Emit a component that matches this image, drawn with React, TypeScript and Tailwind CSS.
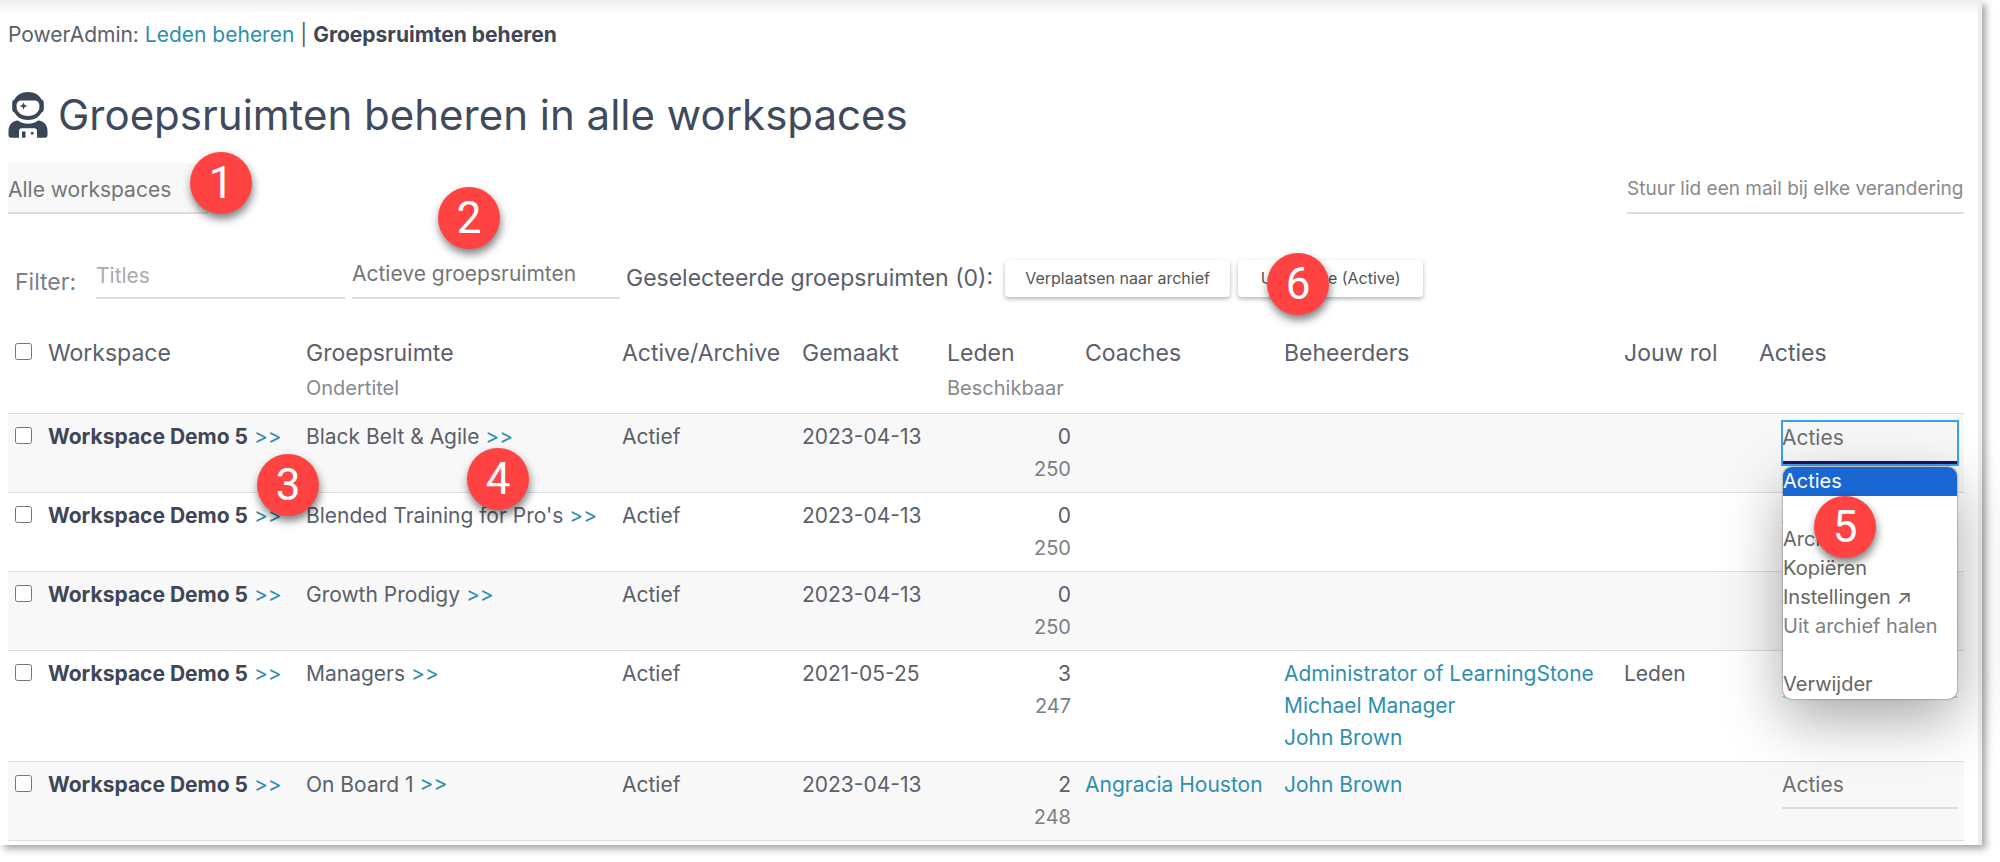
import React from 'react';

type Group = {
    name: string;
    created: string;
    members: number;
    available: number;
    coaches?: string[];
    admins?: string[];
    role?: string;
};

const groups: Group[] = [
    { name: 'Black Belt & Agile', created: '2023-04-13', members: 0, available: 250 },
    { name: "Blended Training for Pro's", created: '2023-04-13', members: 0, available: 250 },
    { name: 'Growth Prodigy', created: '2023-04-13', members: 0, available: 250 },
    {
        name: 'Managers',
        created: '2021-05-25',
        members: 3,
        available: 247,
        admins: ['Administrator of LearningStone', 'Michael Manager', 'John Brown'],
        role: 'Leden',
    },
    {
        name: 'On Board 1',
        created: '2023-04-13',
        members: 2,
        available: 248,
        coaches: ['Angracia Houston'],
        admins: ['John Brown'],
    },
];

const AdminIcon = () => (
    <svg viewBox="0 0 40 46" className="h-[46px] w-10 shrink-0" aria-hidden="true">
        <path
            fill="#3b4558"
            fillRule="evenodd"
            d="M20 0c6.500 0 11.500 3 13.500 7.500 1.700.6 2.300 1.800 2.300 3.500v6c0 1.800-.7 3-2.300 3.500C31.500 25 26.500 28 20 28S8.500 25 6.500 20.500C4.800 20 4.200 18.800 4.200 17v-6c0-1.700.6-2.900 2.300-3.500C8.500 3 13.500 0 20 0zM13.500 8.500c-3.500 0-5 2.300-5 5.800C8.500 20 13 24 20 24s11.500-4 11.500-9.700c0-3.500-1.500-5.800-5-5.800z"
        />
        <path fill="#3b4558" d="M15.500 10.500l1.200 2.600 2.800.9-2.800.9-1.200 2.600-1.200-2.600-2.800-.9 2.800-.9z" />
        <path
            fill="#3b4558"
            d="M10 28.500c2.800 2.300 6.300 3.300 10 3.300s7.200-1 10-3.300c6 .5 9.500 4.500 9.500 10.500v4c0 1.800-.8 2.700-2.700 2.700H29V39c0-1.800-.8-2.700-2.600-2.700H13.600c-1.800 0-2.600.9-2.600 2.700v6.700H3.200C1.300 45.700.5 44.800.5 43v-4c0-6 3.500-10 9.500-10.500z"
        />
        <path fill="#3b4558" d="M14 39.500h3.500v6.200H14zM23 40h2.500v2.500H23z" />
    </svg>
);

const Badge = ({ nr, className }: { nr: number; className: string }) => (
    <span
        className={`absolute z-20 flex size-[62px] items-center justify-center rounded-full bg-[#ff4242] font-['Roboto','Liberation_Sans',sans-serif] text-[44px] leading-none text-white shadow-[1px_5px_8px_rgba(0,0,0,0.5)] ${className}`}
    >
        {nr}
    </span>
);

const ActionMenu = () => (
    <ul
        role="listbox"
        aria-label="Acties"
        className="absolute top-[46px] left-px z-10 w-[174px] overflow-hidden rounded-[9px] bg-white text-[20px] leading-[29px] whitespace-nowrap text-[#666] shadow-[0_0_2px_rgba(0,0,0,0.6),0_20px_60px_rgba(0,0,0,0.35)]"
    >
        <li role="option" aria-selected="true" className="bg-[#1967d2] text-white">Acties</li>
        <li role="separator" className="h-[29px]" />
        <li role="option" aria-selected="false">Archiveer</li>
        <li role="option" aria-selected="false">Kopiëren</li>
        <li role="option" aria-selected="false">Instellingen ↗</li>
        <li role="option" aria-selected="false" className="text-[#808080]">Uit archief halen</li>
        <li role="separator" className="h-[29px]" />
        <li role="option" aria-selected="false">Verwijder</li>
    </ul>
);

const PersonList = ({ people = [] }: { people?: string[] }) => (
    <>
        {people.map((person) => (
            <a key={person} href="#" className="block text-[#2f8fae]">{person}</a>
        ))}
    </>
);

const GroupRow = ({ group, open }: { group: Group; open: boolean }) => (
    <tr className="border-b border-[#dcdee0] align-top odd:bg-[#f8f8f8]">
        <td className="py-[7px] pl-[7px]">
            <input type="checkbox" aria-label={`Selecteer ${group.name}`} className="mt-1.5 block size-[17px]" />
        </td>
        <td className="py-[7px]">
            <b className="font-bold text-[#3f4656]">Workspace Demo 5</b> <a href="#" className="text-[#2f8fae]">&gt;&gt;</a>
        </td>
        <td className="py-[7px]">
            {group.name} <a href="#" className="text-[#2f8fae]">&gt;&gt;</a>
        </td>
        <td className="py-[7px]">Actief</td>
        <td className="py-[7px]">{group.created}</td>
        <td className="py-[7px] pr-3.5 text-right">
            {group.members}
            <div className="text-[20px] text-[#7b8087]">{group.available}</div>
        </td>
        <td className="py-[7px]"><PersonList people={group.coaches} /></td>
        <td className="py-[7px]"><PersonList people={group.admins} /></td>
        <td className="py-[7px]">{group.role}</td>
        <td className="py-[7px] pr-1.5 pl-[23px]">
            <div className="relative">
                <select
                    aria-label={`Acties voor ${group.name}`}
                    className={
                        open
                            ? 'block h-11 w-full appearance-none border-b-4 border-[#1b1464] bg-transparent pb-1.5 text-[21px] text-[#6f6f6f] outline-2 -outline-offset-1 outline-[#3b9ff0]'
                            : 'block h-10 w-full appearance-none border-b-2 border-[#dcdee0] bg-transparent pb-1.5 text-[21px] text-[#6f6f6f]'
                    }
                >
                    <option>Acties</option>
                </select>
                {open && <ActionMenu />}
                {open && <Badge nr={5} className="top-[75px] left-8" />}
            </div>
        </td>
    </tr>
);

const App = () => {
    return (
        <div className="bg-white pr-[18px] pb-[17px]">
            <main className="relative bg-white font-['Inter','Liberation_Sans',sans-serif] text-[21px] text-[#5a606b] shadow-[4px_4px_7px_rgba(0,0,0,0.35)]">
                <div className="absolute inset-x-0 top-0 h-4 bg-linear-to-b from-[#efefef] to-white" />
                <div className="absolute inset-y-0 right-0 w-1 bg-[#ededed]" />
                <div className="relative pr-[18px] pb-1 pl-2">
                    <nav className="pt-[19px] leading-8">
                        PowerAdmin: <a href="#" className="text-[#2f8fae]">Leden beheren</a> |{' '}
                        <b className="font-bold text-[#3f4656]">Groepsruimten beheren</b>
                    </nav>

                    <h1 className="mt-[34px] flex h-[60px] items-center gap-2.5 text-[42px] leading-[60px] text-[#3f4a5c]">
                        <AdminIcon />
                        Groepsruimten beheren in alle workspaces
                    </h1>

                    <div className="mt-[18px] flex justify-between">
                        <select aria-label="Workspace" className="h-[51px] w-[200px] appearance-none border-b-2 border-[#dcdee0] bg-[#f8f8f8] pt-1 text-[21px] text-[#757575]">
                            <option>Alle workspaces</option>
                        </select>
                        <select aria-label="Mail" className="h-[51px] appearance-none border-b-2 border-[#dcdee0] bg-transparent pt-1 text-[19px] text-[#8a8a8a]">
                            <option>Stuur lid een mail bij elke verandering</option>
                        </select>
                    </div>

                    <div className="mt-[35px] flex h-[50px] items-center text-[23px]">
                        <label htmlFor="filter" className="ml-[7px] w-[81px] shrink-0 pt-4 text-[#78808a]">Filter:</label>
                        <input
                            id="filter"
                            type="text"
                            placeholder="Titles"
                            className="h-full w-[249px] border-b-2 border-[#dcdee0] pt-1 text-[21px] outline-none placeholder:text-[#aaa]"
                        />
                        <select aria-label="Status" className="ml-[7px] h-full w-[268px] appearance-none border-b-2 border-[#dcdee0] bg-transparent pt-0.5 text-[21px] text-[#757575]">
                            <option>Actieve groepsruimten</option>
                        </select>
                        <div className="flex items-center pt-2 whitespace-nowrap">
                            <span className="ml-1.5">Geselecteerde groepsruimten (0):</span>
                            <button type="button" className="ml-3 h-[37px] w-[225px] rounded bg-white text-[16px] text-[#555] shadow-[0_2px_4px_rgba(60,70,100,0.4)]">
                                Verplaatsen naar archief
                            </button>
                            <button type="button" className="ml-2 h-[37px] w-[185px] rounded bg-white text-[16px] text-[#555] shadow-[0_2px_4px_rgba(60,70,100,0.4)]">
                                Unarchive (Active)
                            </button>
                        </div>
                    </div>

                    <table className="mt-[31px] w-full table-fixed border-collapse text-left leading-8">
                        <colgroup>
                            <col className="w-10" />
                            <col className="w-[258px]" />
                            <col className="w-[316px]" />
                            <col className="w-[180px]" />
                            <col className="w-[145px]" />
                            <col className="w-[138px]" />
                            <col className="w-[199px]" />
                            <col />
                            <col className="w-[135px]" />
                            <col className="w-[205px]" />
                        </colgroup>
                        <thead>
                            <tr className="h-[83px] border-b border-[#dcdee0] align-top text-[23px]">
                                <th className="pt-[7px] pl-[7px]">
                                    <input type="checkbox" aria-label="Selecteer alles" className="mt-1.5 block size-[17px]" />
                                </th>
                                <th className="pt-[7px] font-normal">Workspace</th>
                                <th className="pt-[7px] font-normal">
                                    Groepsruimte
                                    <div className="pt-[3px] text-[20px] text-[#858a90]">Ondertitel</div>
                                </th>
                                <th className="pt-[7px] font-normal">Active/Archive</th>
                                <th className="pt-[7px] font-normal">Gemaakt</th>
                                <th className="pt-[7px] font-normal">
                                    Leden
                                    <div className="pt-[3px] text-[20px] text-[#858a90]">Beschikbaar</div>
                                </th>
                                <th className="pt-[7px] font-normal">Coaches</th>
                                <th className="pt-[7px] font-normal">Beheerders</th>
                                <th className="pt-[7px] font-normal">Jouw rol</th>
                                <th className="pt-[7px] font-normal">Acties</th>
                            </tr>
                        </thead>
                        <tbody>
                            {groups.map((group, i) => (
                                <GroupRow key={group.name} group={group} open={i === 0} />
                            ))}
                        </tbody>
                    </table>
                </div>

                <Badge nr={1} className="top-[152px] left-[190px]" />
                <Badge nr={2} className="top-[187px] left-[438px]" />
                <Badge nr={3} className="top-[454px] left-[257px]" />
                <Badge nr={4} className="top-[448px] left-[467px]" />
                <Badge nr={6} className="top-[253px] left-[1267px]" />
            </main>
        </div>
    );
};

export default App;
